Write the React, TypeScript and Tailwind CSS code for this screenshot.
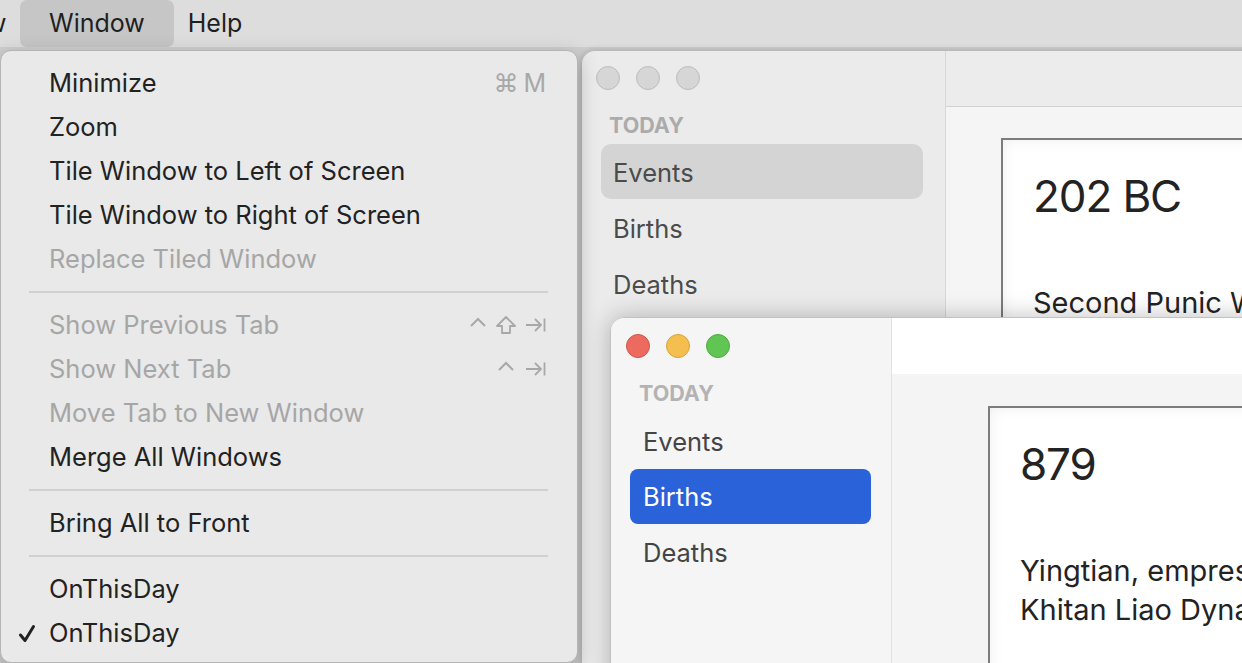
import React from "react";

type MenuRow =
  | { kind: "item"; label: string; disabled?: boolean; checked?: boolean; shortcut?: React.ReactNode }
  | { kind: "sep" };

const Caret = () => (
  <svg width="18" height="12" viewBox="0 0 18 12" fill="none" stroke="currentColor" strokeWidth="2">
    <path d="M2 10 L9 3 L16 10" />
  </svg>
);

const Shift = () => (
  <svg width="22" height="20" viewBox="0 0 22 20" fill="none" stroke="currentColor" strokeWidth="1.8" strokeLinejoin="round">
    <path d="M11 2 L20 11 L15 11 L15 18 L7 18 L7 11 L2 11 Z" />
  </svg>
);

const TabKey = () => (
  <svg width="21" height="16" viewBox="0 0 21 16" fill="none" stroke="currentColor" strokeWidth="1.8">
    <path d="M1 8 H16 M10 2 L16 8 L10 14 M19.5 1.5 V14.5" />
  </svg>
);

const Check = () => (
  <svg width="18" height="19" viewBox="0 0 18 19" fill="none" stroke="currentColor" strokeWidth="3" strokeLinecap="round" strokeLinejoin="round">
    <path d="M2.5 11 L7 16.5 L15.5 2.5" />
  </svg>
);

const rows: MenuRow[] = [
  {
    kind: "item",
    label: "Minimize",
    shortcut: (
      <span className="flex items-center gap-[5px] text-[25px] leading-none">
        <span>⌘</span>
        <span>M</span>
      </span>
    ),
  },
  { kind: "item", label: "Zoom" },
  { kind: "item", label: "Tile Window to Left of Screen" },
  { kind: "item", label: "Tile Window to Right of Screen" },
  { kind: "item", label: "Replace Tiled Window", disabled: true },
  { kind: "sep" },
  {
    kind: "item",
    label: "Show Previous Tab",
    disabled: true,
    shortcut: (
      <span className="flex items-center gap-[8px]">
        <span className="-mt-[6px]">
          <Caret />
        </span>
        <Shift />
        <TabKey />
      </span>
    ),
  },
  {
    kind: "item",
    label: "Show Next Tab",
    disabled: true,
    shortcut: (
      <span className="flex items-center gap-[10px]">
        <span className="-mt-[6px]">
          <Caret />
        </span>
        <TabKey />
      </span>
    ),
  },
  { kind: "item", label: "Move Tab to New Window", disabled: true },
  { kind: "item", label: "Merge All Windows" },
  { kind: "sep" },
  { kind: "item", label: "Bring All to Front" },
  { kind: "sep" },
  { kind: "item", label: "OnThisDay" },
  { kind: "item", label: "OnThisDay", checked: true },
];

function Lights({ active }: { active: boolean }) {
  const colors = active
    ? ["bg-[#ed6a5e] border-[#d0554a]", "bg-[#f5bf4f] border-[#d9a23a]", "bg-[#61c554] border-[#4ea942]"]
    : ["bg-[#d6d6d6] border-[#bdbdbd]", "bg-[#d6d6d6] border-[#bdbdbd]", "bg-[#d6d6d6] border-[#bdbdbd]"];
  return (
    <div className="flex gap-[16px]">
      {colors.map((c, i) => (
        <span key={i} className={`block w-[24px] h-[24px] rounded-full border ${c}`} />
      ))}
    </div>
  );
}

function Card({ year, lines }: { year: string; lines: string[] }) {
  return (
    <div className="w-[600px] h-[400px] bg-white border-2 border-[#7c7c7c] shadow-[inset_0_0_14px_rgba(0,0,0,0.07)] pl-[30px] pt-[28px]">
      <div className="text-[44px] leading-[56px] tracking-[-0.025em] text-[#232323]">{year}</div>
      <div className="mt-[59px] text-[29px] leading-[39px] text-[#232323]">
        {lines.map((l, i) => (
          <div key={i} className="whitespace-nowrap">
            {l}
          </div>
        ))}
      </div>
    </div>
  );
}

export default function App() {
  return (
    <div
      className="relative w-[1242px] h-[663px] overflow-hidden bg-[#cfcfcf]"
      style={{ fontFamily: "Inter, 'Noto Sans', sans-serif" }}
    >
      {/* Menu bar */}
      <div className="absolute left-0 top-0 w-full h-[47px] bg-[#dddddd] flex items-center text-[25px] text-[#1f1f1f]">
        <span className="-ml-[14px] w-[30px]">w</span>
        <span className="ml-[4px] h-[47px] px-[29px] flex items-center rounded-[7px] bg-[#c6c6c6]">Window</span>
        <span className="ml-[14px]">Help</span>
      </div>

      {/* Back window */}
      <div className="absolute left-[581px] top-[50px] w-[700px] h-[640px] rounded-tl-[14px] border border-[#b9b9b9] overflow-hidden flex shadow-[0_0_6px_rgba(0,0,0,0.2)]">
        <div className="w-[364px] shrink-0 bg-[#ebebeb] border-r border-[#d8d8d8]">
          <div className="pl-[14px] pt-[15px]">
            <Lights active={false} />
          </div>
          <div className="pl-[27px] mt-[23px] text-[21.5px] leading-[24px] font-bold text-[#ababab]">TODAY</div>
          <div className="mt-[7px] pl-[19px] pr-[22px] text-[25.5px] text-[#4b4b4b]">
            <div className="h-[55px] mb-[1px] rounded-[10px] bg-[#d4d4d4] pl-[12px] pt-[3px] flex items-center">Events</div>
            <div className="h-[56px] pl-[12px] pt-[3px] flex items-center">Births</div>
            <div className="h-[56px] pl-[12px] pt-[3px] flex items-center">Deaths</div>
          </div>
        </div>
        <div className="flex-1 flex flex-col">
          <div className="h-[56px] bg-[#ececec] border-b border-[#d2d2d2]" />
          <div className="flex-1 bg-[#f5f5f5] pl-[55px] pt-[31px]">
            <Card year="202 BC" lines={["Second Punic War"]} />
          </div>
        </div>
      </div>

      {/* Front window */}
      <div className="absolute left-[610px] top-[317px] w-[700px] h-[400px] rounded-tl-[14px] border border-[#c2c2c2] overflow-hidden flex shadow-[0_0_24px_rgba(0,0,0,0.25)]">
        <div className="w-[281px] shrink-0 bg-[#f5f5f5] border-r border-[#e2e2e2]">
          <div className="pl-[15px] pt-[16px]">
            <Lights active={true} />
          </div>
          <div className="pl-[28px] mt-[23px] text-[21.5px] leading-[24px] font-bold text-[#b3b3b3]">TODAY</div>
          <div className="mt-[8px] pl-[19px] pr-[20px] text-[25.5px] text-[#444444]">
            <div className="h-[56px] pl-[13px] pt-[2px] flex items-center">Events</div>
            <div className="h-[55px] rounded-[8px] bg-[#2a63d9] text-white pl-[13px] pt-[2px] flex items-center">Births</div>
            <div className="h-[57px] pl-[13px] pt-[2px] flex items-center">Deaths</div>
          </div>
        </div>
        <div className="flex-1 flex flex-col">
          <div className="h-[56px] bg-white shrink-0" />
          <div className="flex-1 bg-[#f4f4f4] pl-[96px] pt-[32px]">
            <Card year="879" lines={["Yingtian, empress of the", "Khitan Liao Dynasty"]} />
          </div>
        </div>
      </div>

      {/* Window menu */}
      <div className="absolute left-0 top-[50px] w-[578px] h-[613px] rounded-[11px] bg-[#e9e9e9] border border-[#b5b5b5] shadow-[0_6px_20px_rgba(0,0,0,0.25)] pt-[10px]">
        {rows.map((r, i) =>
          r.kind === "sep" ? (
            <div key={i} className="h-[22px] flex items-center pl-[28px] pr-[29px]">
              <div className="h-[2px] w-full bg-[#d0d0d0]" />
            </div>
          ) : (
            <div
              key={i}
              className={`relative h-[44px] flex items-center pl-[48px] pr-[31px] text-[25.5px] ${
                r.disabled ? "text-[#a6a6a6]" : "text-[#222222]"
              }`}
            >
              {r.checked && (
                <span className="absolute left-[17px] top-[13px] text-[#222222]">
                  <Check />
                </span>
              )}
              <span className="flex-1">{r.label}</span>
              {r.shortcut && <span className="text-[#a8a8a8]">{r.shortcut}</span>}
            </div>
          )
        )}
      </div>
    </div>
  );
}
